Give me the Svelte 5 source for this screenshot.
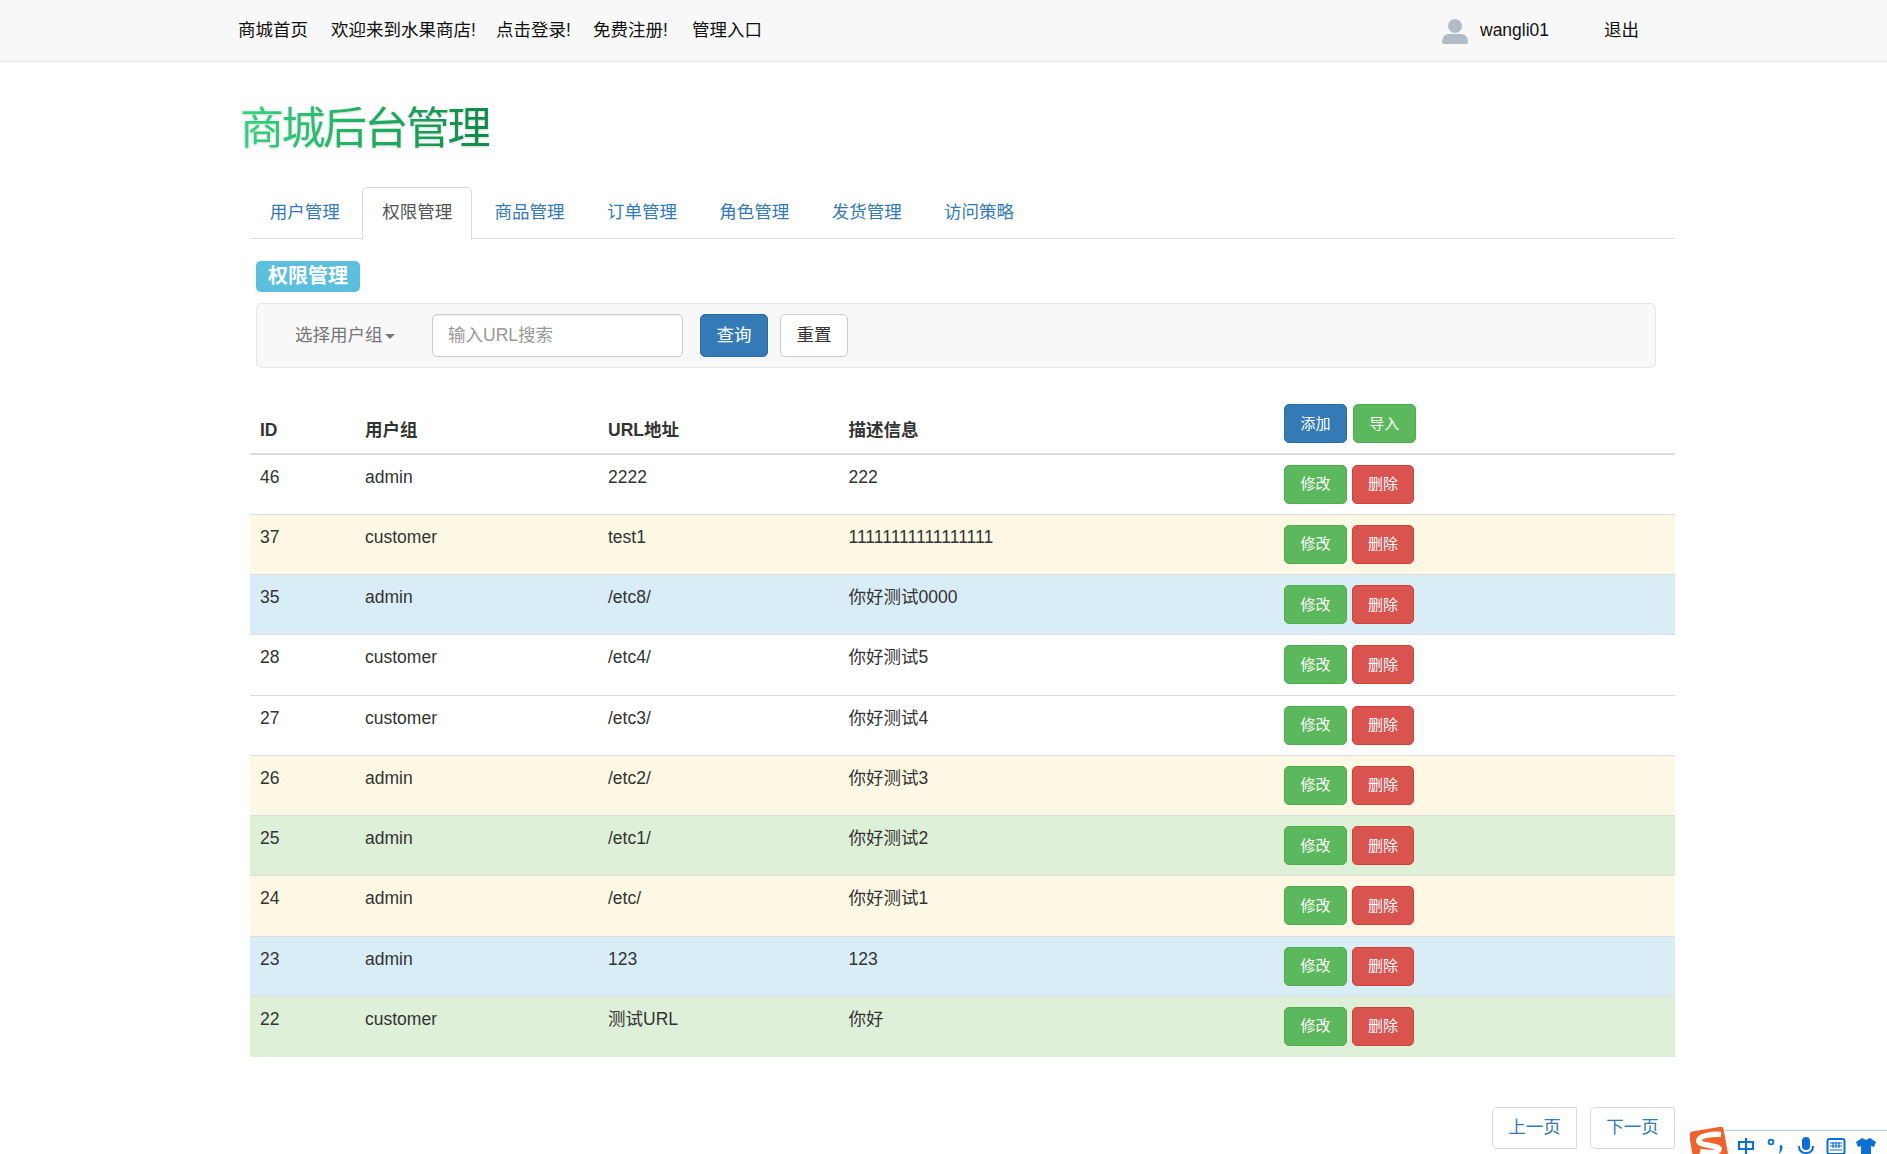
<script>
  const navLinks = [
    { text: '商城首页', w: 93 },
    { text: '欢迎来到水果商店!', w: 165 },
    { text: '点击登录!', w: 97 },
    { text: '免费注册!', w: 99 },
    { text: '管理入口', w: 90 }
  ];
  const tabs = ['用户管理', '权限管理', '商品管理', '订单管理', '角色管理', '发货管理', '访问策略'];
  const rows = [
    { id: 46, group: 'admin', url: '2222', desc: '222', cls: '' },
    { id: 37, group: 'customer', url: 'test1', desc: '11111111111111111', cls: 'warning' },
    { id: 35, group: 'admin', url: '/etc8/', desc: '你好测试0000', cls: 'info' },
    { id: 28, group: 'customer', url: '/etc4/', desc: '你好测试5', cls: '' },
    { id: 27, group: 'customer', url: '/etc3/', desc: '你好测试4', cls: '' },
    { id: 26, group: 'admin', url: '/etc2/', desc: '你好测试3', cls: 'warning' },
    { id: 25, group: 'admin', url: '/etc1/', desc: '你好测试2', cls: 'success' },
    { id: 24, group: 'admin', url: '/etc/', desc: '你好测试1', cls: 'warning' },
    { id: 23, group: 'admin', url: '123', desc: '123', cls: 'info' },
    { id: 22, group: 'customer', url: '测试URL', desc: '你好', cls: 'success' }
  ];
</script>

<header class="navbar">
  <nav class="nav-left">
    {#each navLinks as l}
      <a href="#top" class="nav-link" style="width:{l.w}px">{l.text}</a>
    {/each}
  </nav>
  <div class="nav-right">
    <svg class="avatar" viewBox="0 0 26 26" width="26" height="26" aria-hidden="true">
      <circle cx="13" cy="8" r="7" fill="#b1bcc6" />
      <path d="M0 24c0-6 4-8 7-8h12c3 0 7 2 7 8 0 1-1 2-2 2H2c-1 0-2-1-2-2z" fill="#b1bcc6" />
    </svg>
    <span class="user">wangli01</span>
    <a href="#top" class="logout">退出</a>
  </div>
</header>

<main class="page">
  <h1 class="title">商城后台管理</h1>

  <ul class="tabs">
    {#each tabs as t, i}
      <li class="tab" class:active={i === 1}>{t}</li>
    {/each}
  </ul>

  <div class="inner">
    <span class="label">权限管理</span>
    <form class="filter">
      <span class="dropdown">选择用户组<i class="caret"></i></span>
      <input class="search" placeholder="输入URL搜索" />
      <button type="button" class="btn big primary">查询</button>
      <button type="button" class="btn big default">重置</button>
    </form>
  </div>

  <table>
    <colgroup>
      <col class="c1" /><col class="c2" /><col class="c3" /><col class="c4" /><col />
    </colgroup>
    <thead>
      <tr>
        <th>ID</th>
        <th>用户组</th>
        <th>URL地址</th>
        <th>描述信息</th>
        <th class="acts">
          <button type="button" class="btn small primary">添加</button>
          <button type="button" class="btn small success mid">导入</button>
        </th>
      </tr>
    </thead>
    <tbody>
      {#each rows as r}
        <tr class={r.cls}>
          <td>{r.id}</td>
          <td>{r.group}</td>
          <td>{r.url}</td>
          <td>{r.desc}</td>
          <td class="acts">
            <button type="button" class="btn small success">修改</button>
            <button type="button" class="btn small danger">删除</button>
          </td>
        </tr>
      {/each}
    </tbody>
  </table>

  <div class="pager">
    <a href="#top" class="page-btn">上一页</a>
    <a href="#top" class="page-btn">下一页</a>
  </div>
</main>

<aside class="ime">
  <svg class="ime-logo" viewBox="0 0 42 34" width="42" height="34" aria-hidden="true">
    <rect x="1.5" y="4" width="35" height="36" rx="4" transform="rotate(-10 19 22)" fill="#f4602a" />
    <path d="M31 9.5C24 9 11 10 9 14.5c-1.5 4 5 5 11 6 5 1 10 1.5 9 4.5-1 3-11 3-19 1.500" fill="none" stroke="#fff" stroke-width="5.5" />
  </svg>
  <div class="ime-bar">
    <svg viewBox="0 0 18 18" width="18" height="18" aria-hidden="true">
      <path d="M2 5h14v7H2zM9 1v17" fill="none" stroke="#0a6fd6" stroke-width="2.2" />
    </svg>
    <svg viewBox="0 0 20 20" width="20" height="20" aria-hidden="true">
      <circle cx="5" cy="5" r="2.4" fill="none" stroke="#0a6fd6" stroke-width="1.8" />
      <path d="M15 8c2 0 2 3 0 7l-2 2 1-5c-1-2 0-4 1-4z" fill="#0a6fd6" />
    </svg>
    <svg viewBox="0 0 20 20" width="20" height="20" aria-hidden="true">
      <rect x="6" y="0" width="8" height="13" rx="4" fill="#0a6fd6" />
      <path d="M3 9c0 5 3 7 7 7s7-2 7-7M10 16v3" fill="none" stroke="#0a6fd6" stroke-width="2" />
    </svg>
    <svg viewBox="0 0 20 20" width="20" height="20" aria-hidden="true">
      <rect x="1.5" y="2" width="17" height="15" rx="2" fill="none" stroke="#0a6fd6" stroke-width="2" />
      <path d="M4 6h12M4 9h12M4 13h12M7 5v6M10 5v6M13 5v6" stroke="#0a6fd6" stroke-width="1.2" />
    </svg>
    <svg viewBox="0 0 20 20" width="20" height="20" aria-hidden="true">
      <path d="M6 1l4 2 4-2 6 4-2 5-3-1v11H5V9l-3 1-2-5z" fill="#0a6fd6" />
    </svg>
  </div>
</aside>

<style>
  :global(html), :global(body) {
    margin: 0;
    height: 1154px;
    overflow: hidden;
    background: #fff;
  }
  :global(body) {
    font-family: "Liberation Sans", "Noto Sans CJK SC", sans-serif;
    font-size: 17.5px;
    line-height: 25px;
    color: #333;
  }
  * { box-sizing: border-box; }
  a { text-decoration: none; }

  .navbar {
    height: 62px;
    background: #f8f8f8;
    border-bottom: 1px solid #e7e7e7;
    display: flex;
    justify-content: space-between;
    align-items: center;
    padding: 0 248px 0 238px;
  }
  .nav-left, .nav-right { display: flex; align-items: center; }
  .nav-link { color: #111; white-space: nowrap; }
  .avatar { margin-right: 12px; margin-left: 1px; }
  .user { color: #111; width: 124px; }
  .logout { color: #111; white-space: nowrap; }

  .page { padding: 0 212px 0 250px; position: relative; }

  .title {
    margin: 36px 0 0 -10px;
    font-size: 44px;
    line-height: 62px;
    font-weight: 400;
    letter-spacing: -2.5px;
    width: max-content;
    background: linear-gradient(90deg, #2fd67c 0%, #0f8a4a 100%);
    -webkit-background-clip: text;
    background-clip: text;
    color: transparent;
    filter: drop-shadow(0 1px 1px rgba(0,0,0,.18));
  }

  .tabs {
    list-style: none;
    display: flex;
    margin: 27px 0 0;
    padding: 0;
    height: 52px;
    border-bottom: 1.25px solid #ddd;
  }
  .tab {
    height: 52px;
    padding: 12px 18.75px;
    margin-right: 2.9px;
    border: 1.25px solid transparent;
    border-bottom: 0;
    color: #337ab7;
    border-radius: 5px 5px 0 0;
  }
  .tab.active {
    color: #555;
    background: #fff;
    border-color: #ddd;
    height: 53.25px;
  }

  .inner { padding: 0 19px 0 6px; }
  .label {
    display: block;
    width: 104px;
    height: 31px;
    margin-top: 22px;
    background: #5bc0de;
    color: #fff;
    font-weight: 700;
    font-size: 20px;
    line-height: 31px;
    text-align: center;
    border-radius: 5px;
  }
  .filter {
    height: 65px;
    margin-top: 11px;
    background: #f8f8f8;
    border: 1.25px solid #e7e7e7;
    border-radius: 5px;
    display: flex;
    align-items: center;
    padding-left: 38px;
  }
  .dropdown { color: #777; width: 137px; white-space: nowrap; }
  .caret {
    display: inline-block;
    margin-left: 2px;
    vertical-align: middle;
    border-top: 5px solid #777;
    border-left: 5px solid transparent;
    border-right: 5px solid transparent;
  }
  .search {
    width: 251px;
    height: 42.5px;
    padding: 7px 15px;
    border: 1.25px solid #ccc;
    border-radius: 5px;
    font: inherit;
    margin-right: 17px;
    color: #555;
    box-shadow: inset 0 1px 1px rgba(0,0,0,.075);
  }
  .search::placeholder { color: #999; }

  .btn {
    font-family: inherit;
    border-radius: 5px;
    border: 1.25px solid transparent;
    color: #fff;
    padding: 0 0 3px;
    cursor: pointer;
  }
  .btn.big { height: 42.5px; width: 68px; font-size: 17.5px; padding-bottom: 5px; }
  .btn.big + .btn.big { margin-left: 12px; }
  .btn.small { height: 39px; width: 63px; font-size: 15px; vertical-align: middle; }
  .btn.small.danger { margin-left: -0.2px; width: 62.5px; }
  .btn.small.mid { margin-left: 1px; }
  .primary { background: #337ab7; border-color: #2e6da4; }
  .default { background: #fff; border-color: #ccc; color: #333; }
  .success { background: #5cb85c; border-color: #4cae4c; }
  .danger { background: #d9534f; border-color: #d43f3a; }

  table {
    width: 100%;
    margin-top: 34px;
    border-collapse: collapse;
    table-layout: fixed;
  }
  .c1 { width: 105px; }
  .c2 { width: 243px; }
  .c3 { width: 240.5px; }
  .c4 { width: 435.5px; }
  th {
    text-align: left;
    font-weight: 700;
    padding: 0 10px 10px;
    height: 52px;
    vertical-align: bottom;
    border-bottom: 2.5px solid #ddd;
    line-height: 25px;
  }
  td {
    padding: 10px;
    height: 60.25px;
    vertical-align: top;
    border-top: 1.25px solid #ddd;
    line-height: 25px;
  }
  td.acts { white-space: nowrap; padding-top: 9.9px; }
  tbody tr:first-child td { border-top: 0; }
  tr.warning td { background: #fcf8e3; }
  tr.info td { background: #d9edf7; }
  tr.success td { background: #dff0d8; }

  .pager {
    display: flex;
    justify-content: flex-end;
    gap: 13px;
    margin-top: 50px;
  }
  .page-btn {
    width: 85px;
    height: 42px;
    border: 1.25px solid #ddd;
    border-radius: 5px 0 0 5px;
    color: #337ab7;
    text-align: center;
    line-height: 38px;
    background: #fff;
  }

  .ime {
    position: fixed;
    left: 1690px;
    top: 1125px;
    width: 197px;
    height: 29px;
  }
  .ime-logo { position: absolute; left: 0; top: 0; z-index: 1; }
  .ime-bar {
    position: absolute;
    left: 35px;
    right: 0;
    top: 5px;
    height: 24px;
    border-top: 1px solid #b7cde8;
    background: #fff;
    display: flex;
    gap: 10px;
    align-items: flex-start;
    padding: 6px 0 0 12px;
  }
  .ime-bar svg:first-child { margin-right: 1px; }
</style>
